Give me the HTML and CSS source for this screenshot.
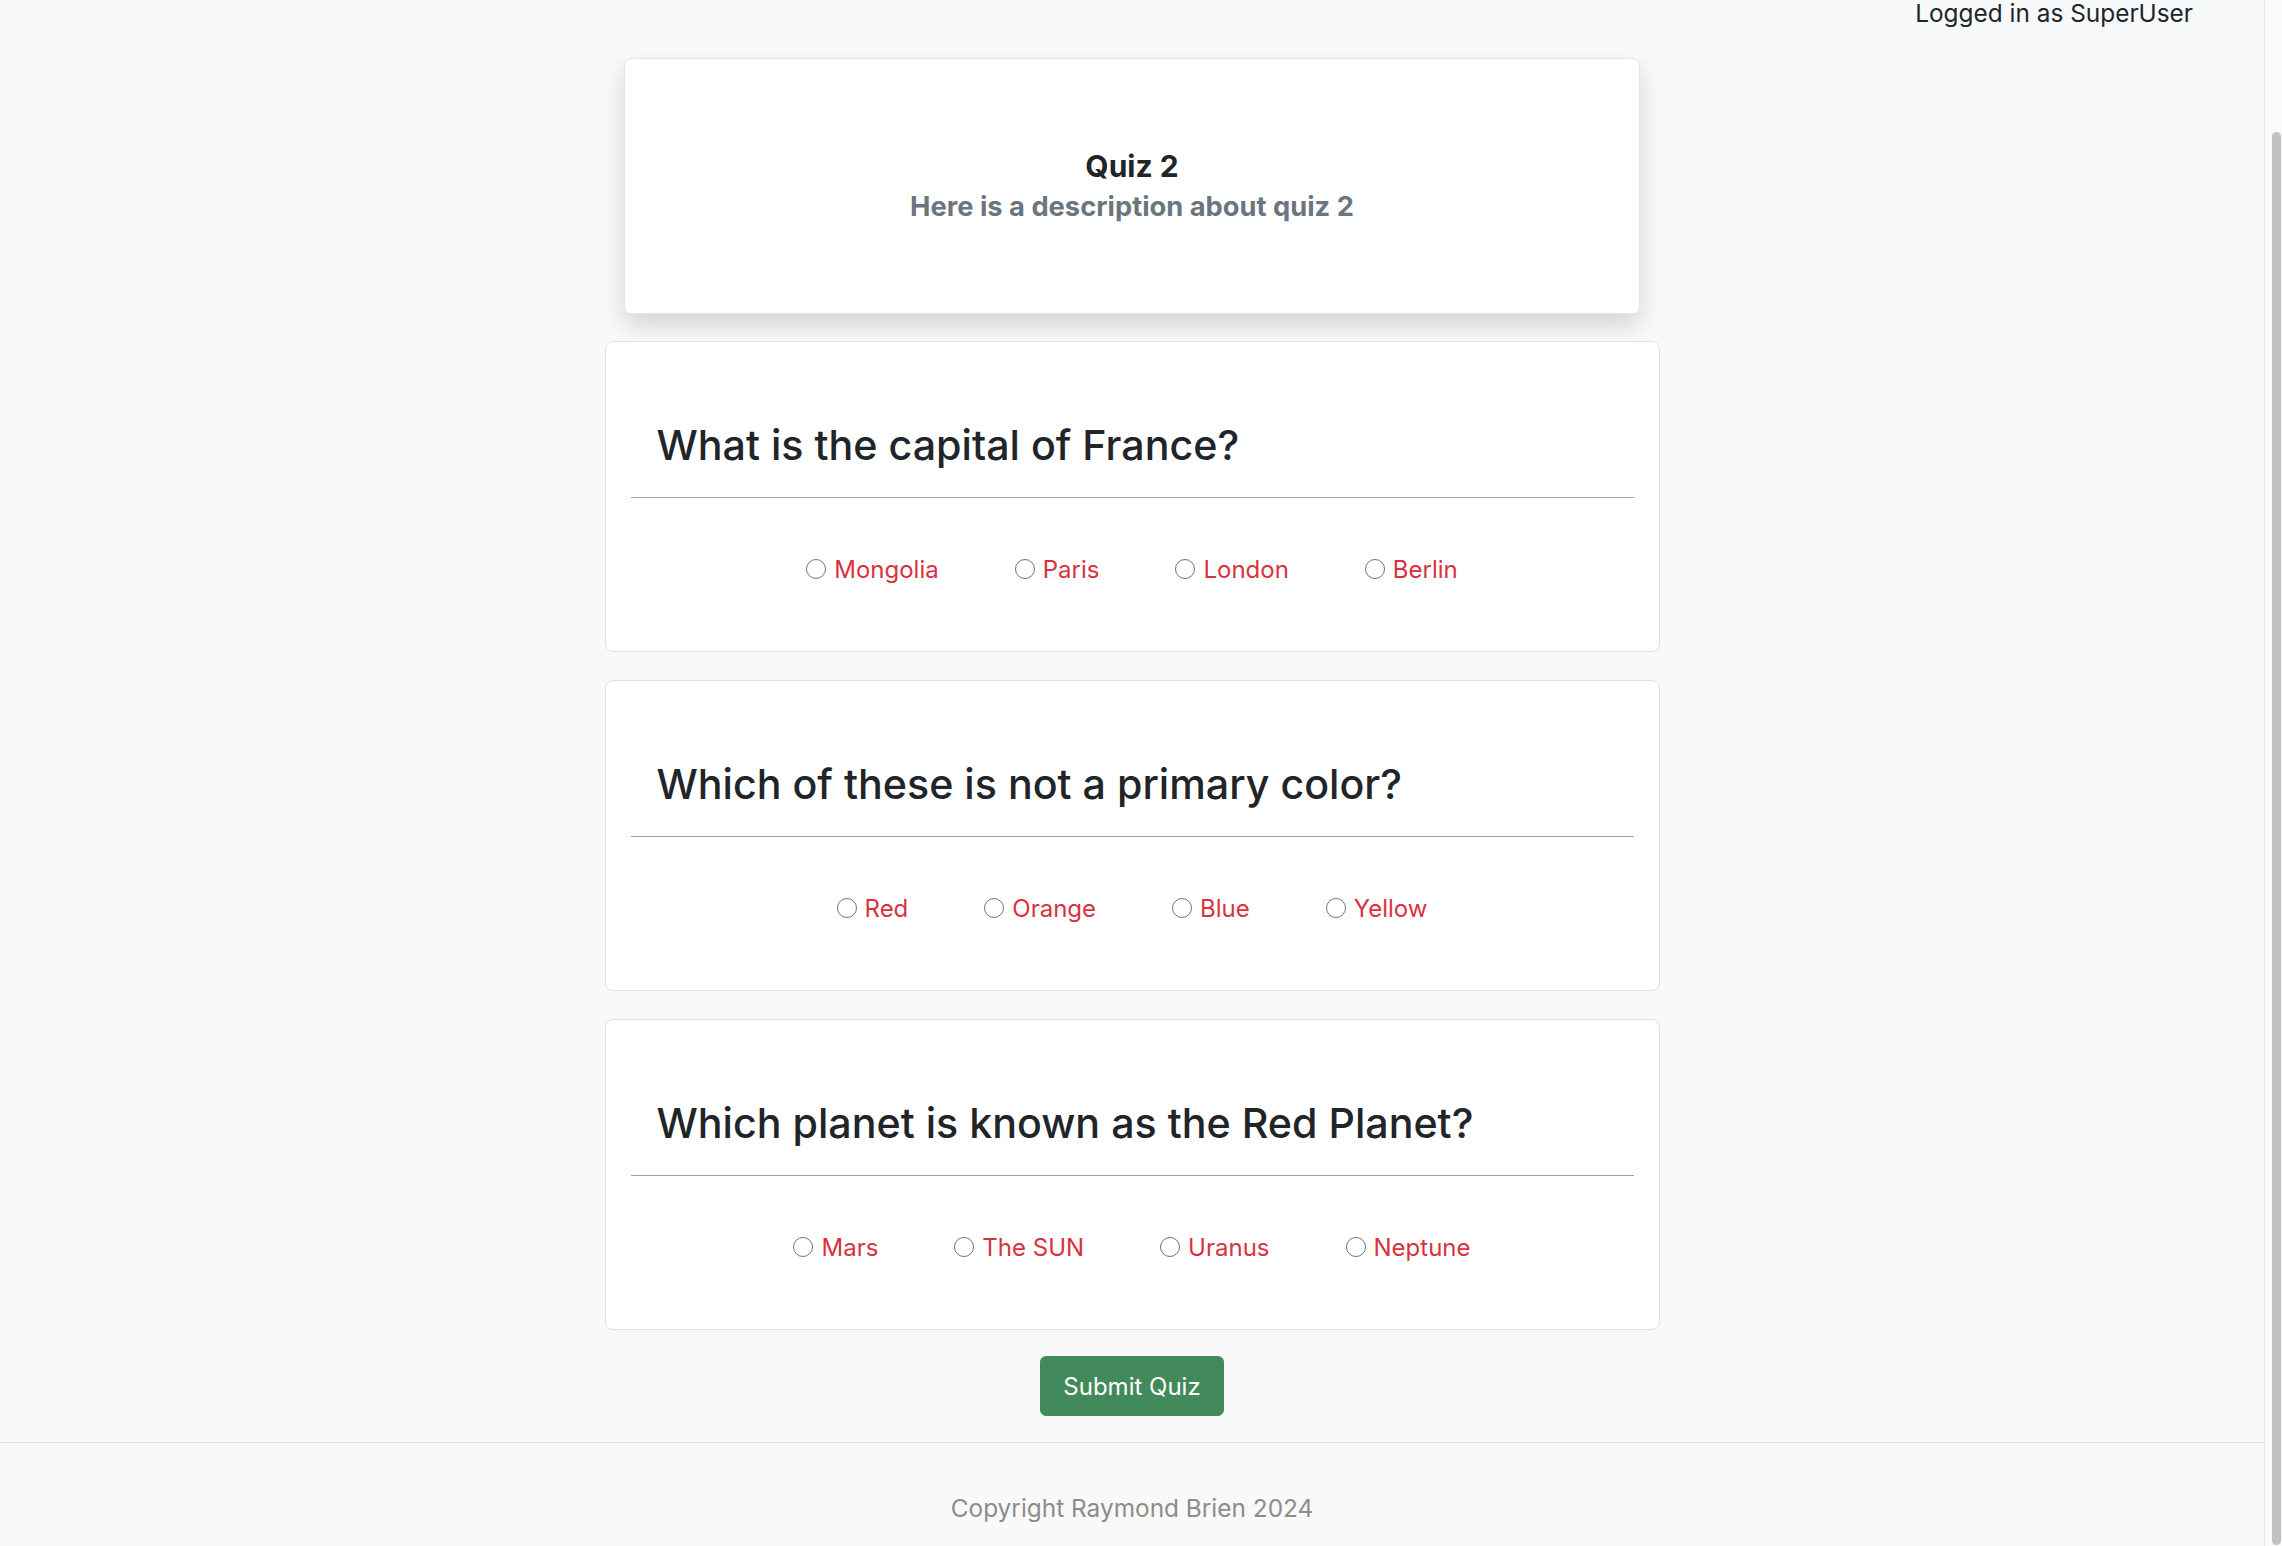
FILE: index.html
```html
<!DOCTYPE html>
<html lang="en">
<head>
<meta charset="utf-8">
<title>Quiz 2</title>
<link rel="stylesheet" href="styles.css">
</head>
<body>
<div class="page">
  <div class="topbar">Logged in as SuperUser</div>
  <main class="content">
    <section class="quiz-header">
      <h5 class="quiz-title">Quiz 2</h5>
      <h6 class="quiz-desc">Here is a description about quiz 2</h6>
    </section>

    <form class="quiz-form">
      <section class="question-card">
        <h3 class="question-title">What is the capital of France?</h3>
        <hr class="divider">
        <div class="options">
          <label class="option"><input type="radio" name="q1"><span>Mongolia</span></label>
          <label class="option"><input type="radio" name="q1"><span>Paris</span></label>
          <label class="option"><input type="radio" name="q1"><span>London</span></label>
          <label class="option"><input type="radio" name="q1"><span>Berlin</span></label>
        </div>
      </section>

      <section class="question-card">
        <h3 class="question-title">Which of these is not a primary color?</h3>
        <hr class="divider">
        <div class="options">
          <label class="option"><input type="radio" name="q2"><span>Red</span></label>
          <label class="option"><input type="radio" name="q2"><span>Orange</span></label>
          <label class="option"><input type="radio" name="q2"><span>Blue</span></label>
          <label class="option"><input type="radio" name="q2"><span>Yellow</span></label>
        </div>
      </section>

      <section class="question-card">
        <h3 class="question-title">Which planet is known as the Red Planet?</h3>
        <hr class="divider">
        <div class="options">
          <label class="option"><input type="radio" name="q3"><span>Mars</span></label>
          <label class="option"><input type="radio" name="q3"><span>The SUN</span></label>
          <label class="option"><input type="radio" name="q3"><span>Uranus</span></label>
          <label class="option"><input type="radio" name="q3"><span>Neptune</span></label>
        </div>
      </section>

      <div class="submit-row">
        <button type="button" class="submit-btn">Submit Quiz</button>
      </div>
    </form>
  </main>
  <footer class="footer">Copyright Raymond Brien 2024</footer>
</div>
<div class="scrollbar"><div class="thumb"></div></div>
</body>
</html>
```

FILE: styles.css
```css
html, body {
  margin: 0;
  padding: 0;
  height: 100%;
  overflow: hidden;
}

body {
  display: flex;
  font-family: "Inter", "Liberation Sans", sans-serif;
  color: #212529;
  background: #f8f9fa;
}

.page {
  flex: 1;
  display: flex;
  flex-direction: column;
  background: #f8f9fa;
  min-width: 0;
}

.topbar {
  font-size: 24.4px;
  line-height: 26px;
  height: 26px;
  text-align: right;
  padding-right: 71px;
  color: #212529;
}

.content {
  display: flex;
  flex-direction: column;
  align-items: center;
}

.quiz-header {
  margin-top: 32px;
  width: 1016px;
  box-sizing: border-box;
  background: #fff;
  border: 1px solid #e4e5e7;
  border-radius: 7px;
  box-shadow: 0 12px 24px rgba(0, 0, 0, 0.15);
  padding: 89px 20px 89px;
  text-align: center;
}

.quiz-title {
  margin: 0;
  font-size: 30px;
  line-height: 36px;
  font-weight: 700;
  color: #212529;
}

.quiz-desc {
  margin: 6px 0 0;
  font-size: 27.3px;
  line-height: 34px;
  font-weight: 700;
  color: #6c757d;
}

.quiz-form {
  display: flex;
  flex-direction: column;
  align-items: center;
  gap: 28px;
  margin-top: 27px;
}

.question-card {
  width: 1055px;
  box-sizing: border-box;
  background: #fff;
  border: 1px solid #dfe1e4;
  border-radius: 8px;
  padding: 78px 25px 63px;
}

.question-title {
  margin: 0;
  padding-left: 26px;
  font-size: 41.2px;
  line-height: 50px;
  font-weight: 500;
  color: #212529;
}

.divider {
  margin: 27px 0 0;
  border: 0;
  border-top: 1px solid #a3a3a3;
  height: 0;
}

.options {
  margin-top: 54px;
  display: flex;
  justify-content: center;
  gap: 76px;
  font-size: 24px;
  line-height: 36px;
}

.option {
  display: flex;
  align-items: center;
  gap: 8px;
  color: #d9323f;
}

.option input {
  appearance: none;
  -webkit-appearance: none;
  margin: 0 0 3px;
  width: 20px;
  height: 20px;
  box-sizing: border-box;
  border: 1.5px solid #737373;
  border-radius: 50%;
  background: #fff;
}

.submit-row {
  display: flex;
  justify-content: center;
  margin-top: -2px;
  margin-bottom: 26px;
}

.submit-btn {
  font-family: "Inter", "Liberation Sans", sans-serif;
  font-size: 24px;
  line-height: 35px;
  padding: 12px 22px 11px;
  border: 1px solid #428a5c;
  border-radius: 6px;
  background: #428a5c;
  color: #fff;
}

.footer {
  flex: 1;
  border-top: 1px solid #dfdfdf;
  background: #f9f9f9;
  text-align: center;
  color: #8c8c8c;
  font-size: 24.4px;
  line-height: 36px;
  padding-top: 47px;
}

.scrollbar {
  width: 17px;
  border-left: 1px solid #e6e6e6;
  background: #fafafa;
  display: flex;
  flex-direction: column;
}

.thumb {
  margin: 132px 1px 1px 7px;
  flex: 1;
  background: #c1c1c1;
  border-radius: 5px;
}
```
